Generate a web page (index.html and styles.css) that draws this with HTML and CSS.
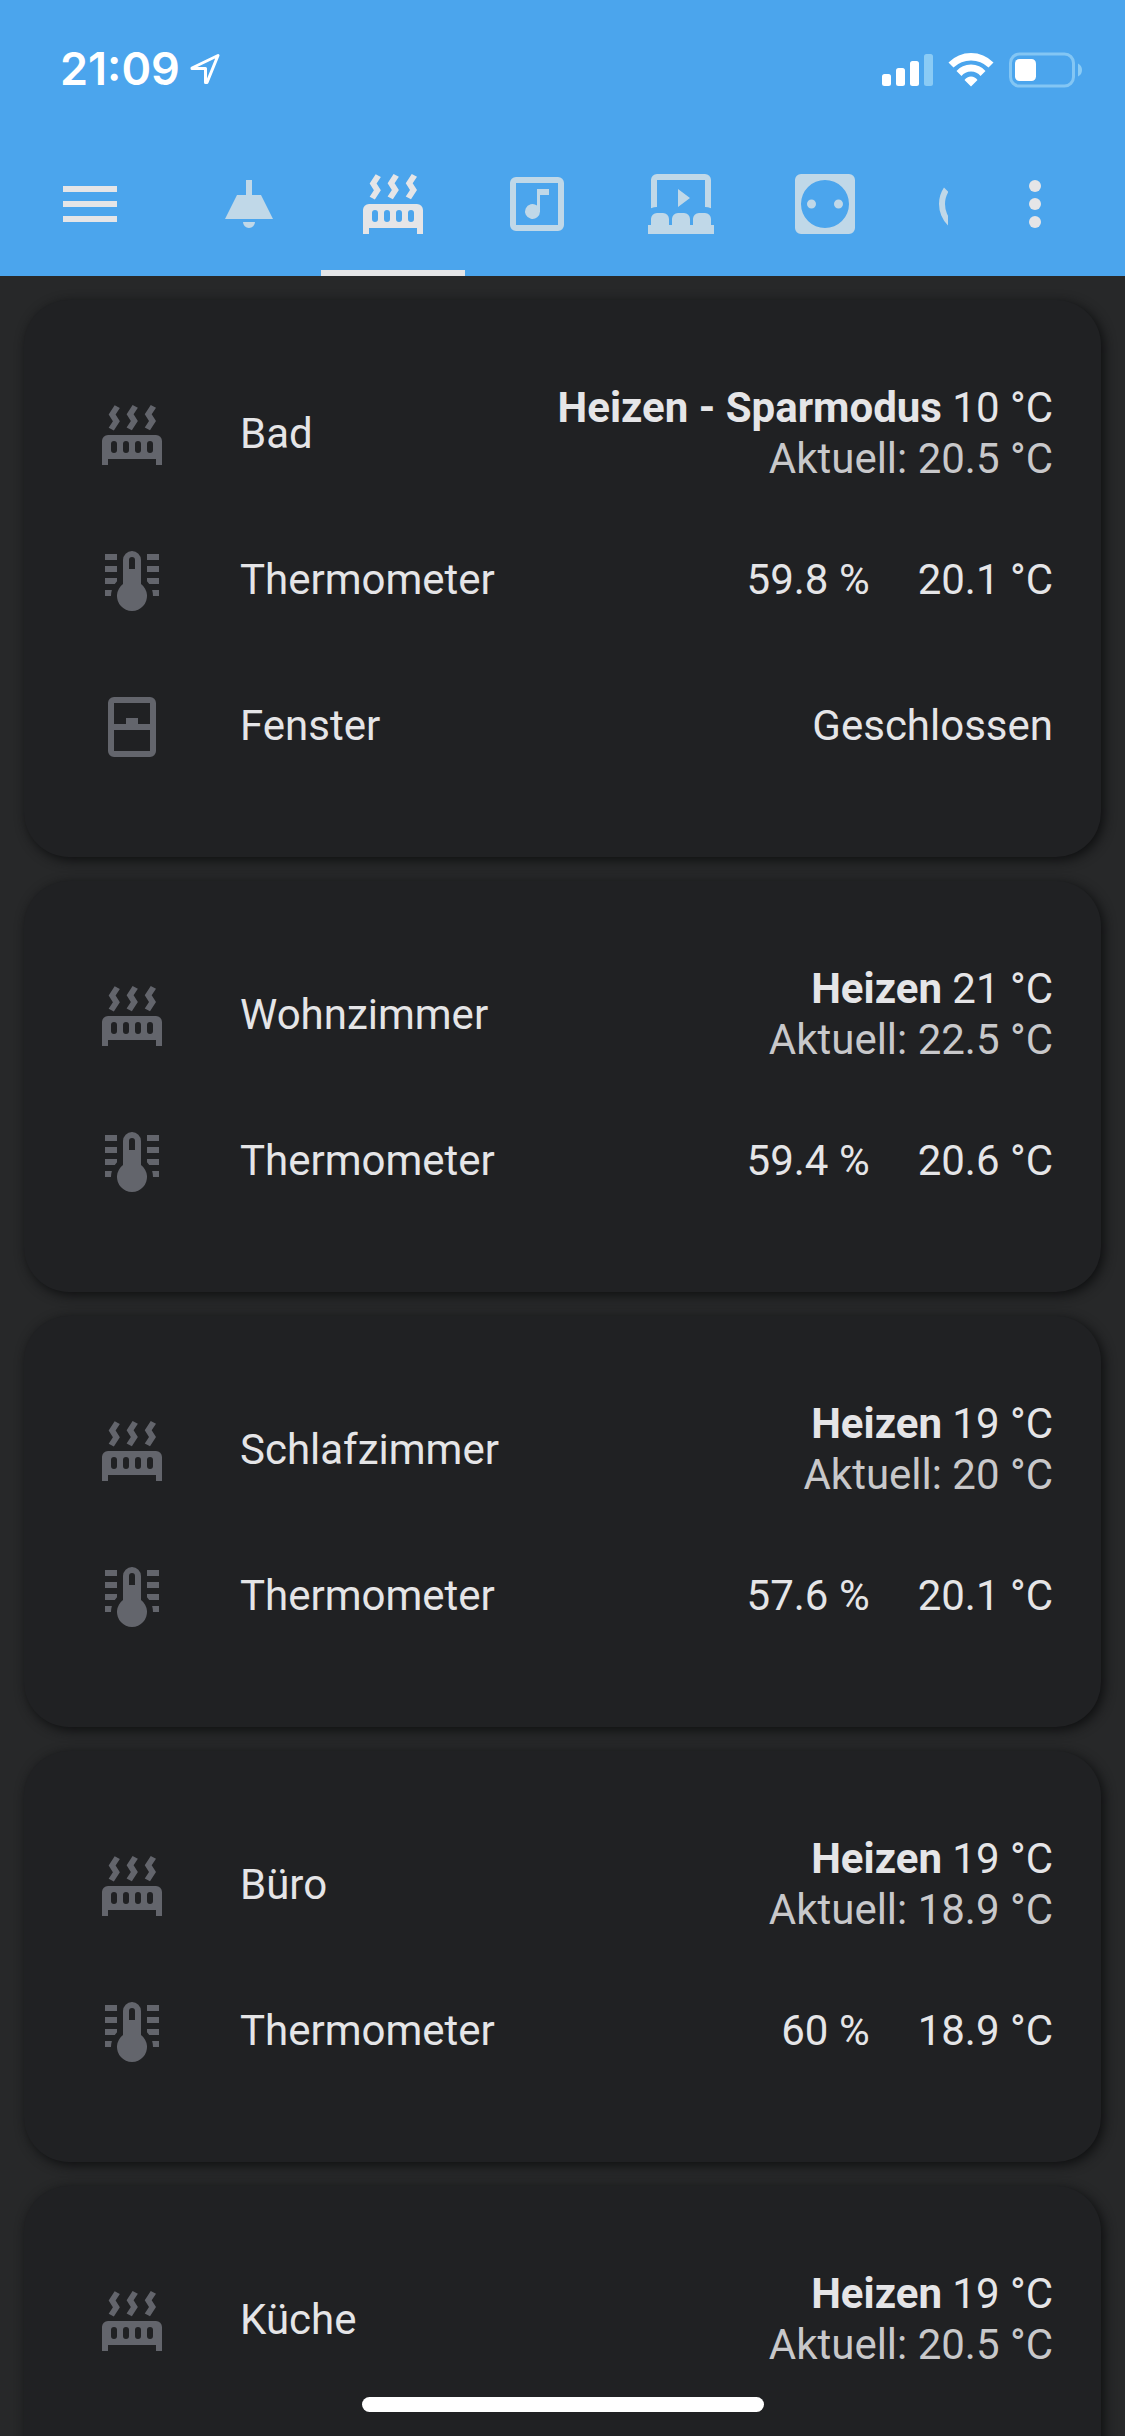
FILE: index.html
```html
<!DOCTYPE html>
<html lang="de">
<head>
<meta charset="utf-8">
<meta name="viewport" content="width=device-width, initial-scale=1">
<title>Heizung</title>
<link rel="stylesheet" href="styles.css">
</head>
<body>
<svg class="defs" aria-hidden="true">
  <symbol id="radiator" viewBox="0 0 24 24"><path fill-rule="evenodd" d="M7.95 3L6.53 5.19 7.95 7.4 5.95 10.5 4.22 9.6 5.64 7.39 4.22 5.19 6.22 2.09ZM13.95 2.89L12.53 5.1 13.95 7.3 11.95 10.4 10.2 9.5 11.62 7.3 10.2 5.1 12.2 2ZM20 2.89L18.56 5.1 20 7.3 18 10.4 16.25 9.5 17.67 7.3 16.25 5.1 18.25 2ZM2 22V14A2 2 0 0 1 4 12H20A2 2 0 0 1 22 14V22H20V20H4V22ZM6 14A1 1 0 0 0 5 15V17A1 1 0 0 0 7 17V15A1 1 0 0 0 6 14M10 14A1 1 0 0 0 9 15V17A1 1 0 0 0 11 17V15A1 1 0 0 0 10 14M14 14A1 1 0 0 0 13 15V17A1 1 0 0 0 15 17V15A1 1 0 0 0 14 14M18 14A1 1 0 0 0 17 15V17A1 1 0 0 0 19 17V15A1 1 0 0 0 18 14Z"/></symbol>
  <symbol id="thermometer" viewBox="0 0 24 24"><path fill-rule="evenodd" d="M17 3H21V5H17ZM17 7H21V9H17ZM17 11H21V13H17.75L17 12.1ZM21 15V17H19Q19 16 18.71 15ZM7 3V5H3V3ZM7 7V9H3V7ZM7 11V12.1L6.25 13H3V11ZM3 15H5.29Q5 16 5 17H3ZM15 13V5A3 3 0 0 0 9 5V13A5 5 0 1 0 15 13M12 4A1 1 0 0 1 13 5V8H11V5A1 1 0 0 1 12 4"/></symbol>
  <symbol id="window" viewBox="0 0 24 24"><path fill-rule="evenodd" d="M6 2H18A2 2 0 0 1 20 4V20A2 2 0 0 1 18 22H6A2 2 0 0 1 4 20V4A2 2 0 0 1 6 2M6 4V11H10V9H14V11H18V4ZM6 13V20H18V13Z"/></symbol>
</svg>

<header class="header">
  <div class="status">
    <div class="status-left">
      <span class="clock">21:09</span>
      <svg class="location" viewBox="0 0 30 32"><path d="M2 15L28 2.500 17 29.500 15.500 29.500V15.500H2Z" fill="none" stroke="currentColor" stroke-width="3" stroke-linejoin="round"/></svg>
    </div>
    <div class="status-right">
      <svg class="signal" viewBox="0 0 51 36"><rect y="23" width="9" height="12" rx="2.500"/><rect x="14" y="17" width="9" height="18" rx="2.500"/><rect x="28" y="10" width="9" height="25" rx="2.500"/><rect class="faint" x="42" y="3" width="9" height="32" rx="2.500"/></svg>
      <svg class="wifi" viewBox="0 0 46 36"><path d="M0.500 11.500Q10 2 23 2T45.500 11.500L40.500 16.500Q33 9.500 23 9.500T5.500 16.500ZM8.500 20Q14 13.500 23 13.500T37.500 20L32.500 25Q29 20.500 23 20.500T13.500 25ZM16.500 29Q19 25.500 23 25.500T29.500 29L23 35.500Z"/></svg>
      <svg class="battery" viewBox="0 0 74 37"><rect class="battery-frame" x="1.500" y="3" width="63" height="32" rx="9"/><rect x="6" y="8" width="21" height="22" rx="4.500"/><path class="faint" d="M69 12.500Q73 14.500 73 19T69 25.500Z"/></svg>
    </div>
  </div>
  <div class="toolbar">
    <button class="icon-button" type="button" aria-label="Menü"><svg class="icon" viewBox="0 0 24 24"><path d="M3 6H21V8H3ZM3 11H21V13H3ZM3 16H21V18H3Z"/></svg></button>
    <nav class="tabs" aria-label="Ansichten">
      <a class="tab" href="#licht" aria-label="Licht"><svg class="icon" viewBox="0 0 24 24"><path d="M11 4H13V9H16L20 17H4L8 9H11ZM10 18H14A2 2 0 0 1 10 18"/></svg></a>
      <a class="tab tab-active" href="#heizung" aria-label="Heizung" aria-current="page"><svg class="icon"><use href="#radiator"/></svg></a>
      <a class="tab" href="#musik" aria-label="Musik"><svg class="icon" viewBox="0 0 24 24"><path fill-rule="evenodd" d="M5 3H19A2 2 0 0 1 21 5V19A2 2 0 0 1 19 21H5A2 2 0 0 1 3 19V5A2 2 0 0 1 5 3M5 5V19H19V5ZM12 7H16V9H13V14.500A2.500 2.500 0 1 1 12 12.500Z"/></svg></a>
      <a class="tab" href="#kino" aria-label="Kino"><svg class="icon" viewBox="0 0 24 24"><path d="M2 13.400V4A2 2 0 0 1 4 2H20A2 2 0 0 1 22 4V13.400Q21 13 20 13V4H4V13Q3 13 2 13.400ZM11 7L15 10 11 13ZM1 22V19H2V17A2 2 0 0 1 4 15H6A2 2 0 0 1 8 17V19H9V17A2 2 0 0 1 11 15H13A2 2 0 0 1 15 17V19H16V17A2 2 0 0 1 18 15H20A2 2 0 0 1 22 17V19H23V22Z"/></svg></a>
      <a class="tab" href="#steckdosen" aria-label="Steckdosen"><svg class="icon" viewBox="0 0 24 24"><path fill-rule="evenodd" d="M4 2H20A2 2 0 0 1 22 4V20A2 2 0 0 1 20 22H4A2 2 0 0 1 2 20V4A2 2 0 0 1 4 2M12 4A8 8 0 1 0 12 20A8 8 0 0 0 12 4M7.500 10.500A1.500 1.500 0 1 1 7.500 13.500A1.500 1.500 0 0 1 7.500 10.500M16.500 10.500A1.500 1.500 0 1 1 16.500 13.500A1.500 1.500 0 0 1 16.500 10.500"/></svg></a>
      <a class="tab" href="#staubsauger" aria-label="Staubsauger"><svg class="icon" viewBox="0 0 24 24"><path d="M12 2C14.650 2 17.190 3.060 19.070 4.930L17.650 6.350C16.150 4.850 14.120 4 12 4C9.880 4 7.840 4.840 6.350 6.350L4.930 4.930C6.810 3.060 9.350 2 12 2M3.660 6.500L5.110 7.940C4.390 9.170 4 10.570 4 12A8 8 0 0 0 20 12C20 10.570 19.610 9.170 18.880 7.940L20.340 6.500C21.420 8.120 22 10.040 22 12A10 10 0 0 1 2 12C2 10.040 2.580 8.120 3.660 6.500"/></svg></a>
    </nav>
    <button class="icon-button" type="button" aria-label="Mehr"><svg class="icon" viewBox="0 0 24 24"><circle cx="12" cy="6" r="2"/><circle cx="12" cy="12" r="2"/><circle cx="12" cy="18" r="2"/></svg></button>
  </div>
</header>

<main class="cards">
  <section class="card">
    <div class="row"><svg class="icon"><use href="#radiator"/></svg><span class="name">Bad</span><div class="climate"><div><b>Heizen - Sparmodus</b> 10 °C</div><div class="current">Aktuell: 20.5 °C</div></div></div>
    <div class="row"><svg class="icon"><use href="#thermometer"/></svg><span class="name">Thermometer</span><div class="values"><span>59.8 %</span><span>20.1 °C</span></div></div>
    <div class="row"><svg class="icon"><use href="#window"/></svg><span class="name">Fenster</span><div class="values"><span>Geschlossen</span></div></div>
  </section>
  <section class="card">
    <div class="row"><svg class="icon"><use href="#radiator"/></svg><span class="name">Wohnzimmer</span><div class="climate"><div><b>Heizen</b> 21 °C</div><div class="current">Aktuell: 22.5 °C</div></div></div>
    <div class="row"><svg class="icon"><use href="#thermometer"/></svg><span class="name">Thermometer</span><div class="values"><span>59.4 %</span><span>20.6 °C</span></div></div>
  </section>
  <section class="card">
    <div class="row"><svg class="icon"><use href="#radiator"/></svg><span class="name">Schlafzimmer</span><div class="climate"><div><b>Heizen</b> 19 °C</div><div class="current">Aktuell: 20 °C</div></div></div>
    <div class="row"><svg class="icon"><use href="#thermometer"/></svg><span class="name">Thermometer</span><div class="values"><span>57.6 %</span><span>20.1 °C</span></div></div>
  </section>
  <section class="card">
    <div class="row"><svg class="icon"><use href="#radiator"/></svg><span class="name">Büro</span><div class="climate"><div><b>Heizen</b> 19 °C</div><div class="current">Aktuell: 18.9 °C</div></div></div>
    <div class="row"><svg class="icon"><use href="#thermometer"/></svg><span class="name">Thermometer</span><div class="values"><span>60 %</span><span>18.9 °C</span></div></div>
  </section>
  <section class="card">
    <div class="row"><svg class="icon"><use href="#radiator"/></svg><span class="name">Küche</span><div class="climate"><div><b>Heizen</b> 19 °C</div><div class="current">Aktuell: 20.5 °C</div></div></div>
  </section>
</main>
<div class="home-indicator"></div>
</body>
</html>
```
FILE: styles.css
```css
* { box-sizing: border-box; }

body {
  margin: 0;
  height: 100vh;
  overflow: hidden;
  display: flex;
  flex-direction: column;
  background: #272829;
  color: #e5e5e7;
  font: 42px/51px Roboto, sans-serif;
}

.defs { display: none; }

.icon {
  display: block;
  flex: none;
  width: 72px;
  height: 72px;
  fill: currentColor;
}

/* Header */
.header {
  flex: none;
  background: #4ba5ed;
}

.status {
  display: flex;
  justify-content: space-between;
  align-items: center;
  height: 132px;
  padding: 6px 42px 0 60px;
  color: #fff;
  fill: #fff;
}

.status-left,
.status-right {
  display: flex;
  align-items: center;
}

.status-left { gap: 10px; }
.status-right { gap: 15px; }

.clock {
  font: 600 45px/54px Inter, sans-serif;
}

.location { width: 30px; height: 32px; }
.signal { width: 51px; height: 36px; }
.wifi { width: 46px; height: 36px; }
.battery { width: 74px; height: 37px; }
.faint { fill: #8acbf5; }

.battery-frame {
  fill: none;
  stroke: #83c6f4;
  stroke-width: 3;
}

.toolbar {
  display: flex;
  height: 144px;
  padding: 0 36px;
}

.icon-button {
  flex: none;
  display: flex;
  justify-content: center;
  align-items: center;
  width: 108px;
  padding: 0;
  border: 0;
  background: none;
  color: inherit;
}

.tabs {
  flex: 1;
  display: flex;
  min-width: 0;
  margin: 0 33px;
  overflow: hidden;
}

.tab {
  flex: none;
  display: flex;
  justify-content: center;
  align-items: center;
  width: 144px;
  color: #c0d8e8;
}

.tab-active {
  color: #e5e5e7;
  box-shadow: inset 0 -6px #e5e5e7;
}

/* Cards */
.cards {
  display: flex;
  flex-direction: column;
  gap: 24px;
  padding: 24px;
}

.card {
  flex: none;
  display: flex;
  flex-direction: column;
  gap: 24px;
  min-height: 411px;
  padding: 72px 48px 71px 72px;
  border-radius: 45px;
  background: #202123;
  box-shadow: 3px 3px 12px #0e0f10;
}

.row {
  display: flex;
  align-items: center;
  height: 122px;
}

.row .icon {
  margin-top: 3px;
  color: #63656c;
}

.name {
  flex: 1;
  margin-left: 72px;
}

.climate { text-align: right; }
.current { color: #c8c8ca; }

.values {
  display: flex;
  gap: 48px;
}

.home-indicator {
  position: fixed;
  left: 50%;
  bottom: 24px;
  width: 402px;
  height: 15px;
  margin-left: -201px;
  border-radius: 8px;
  background: #fff;
}
```
